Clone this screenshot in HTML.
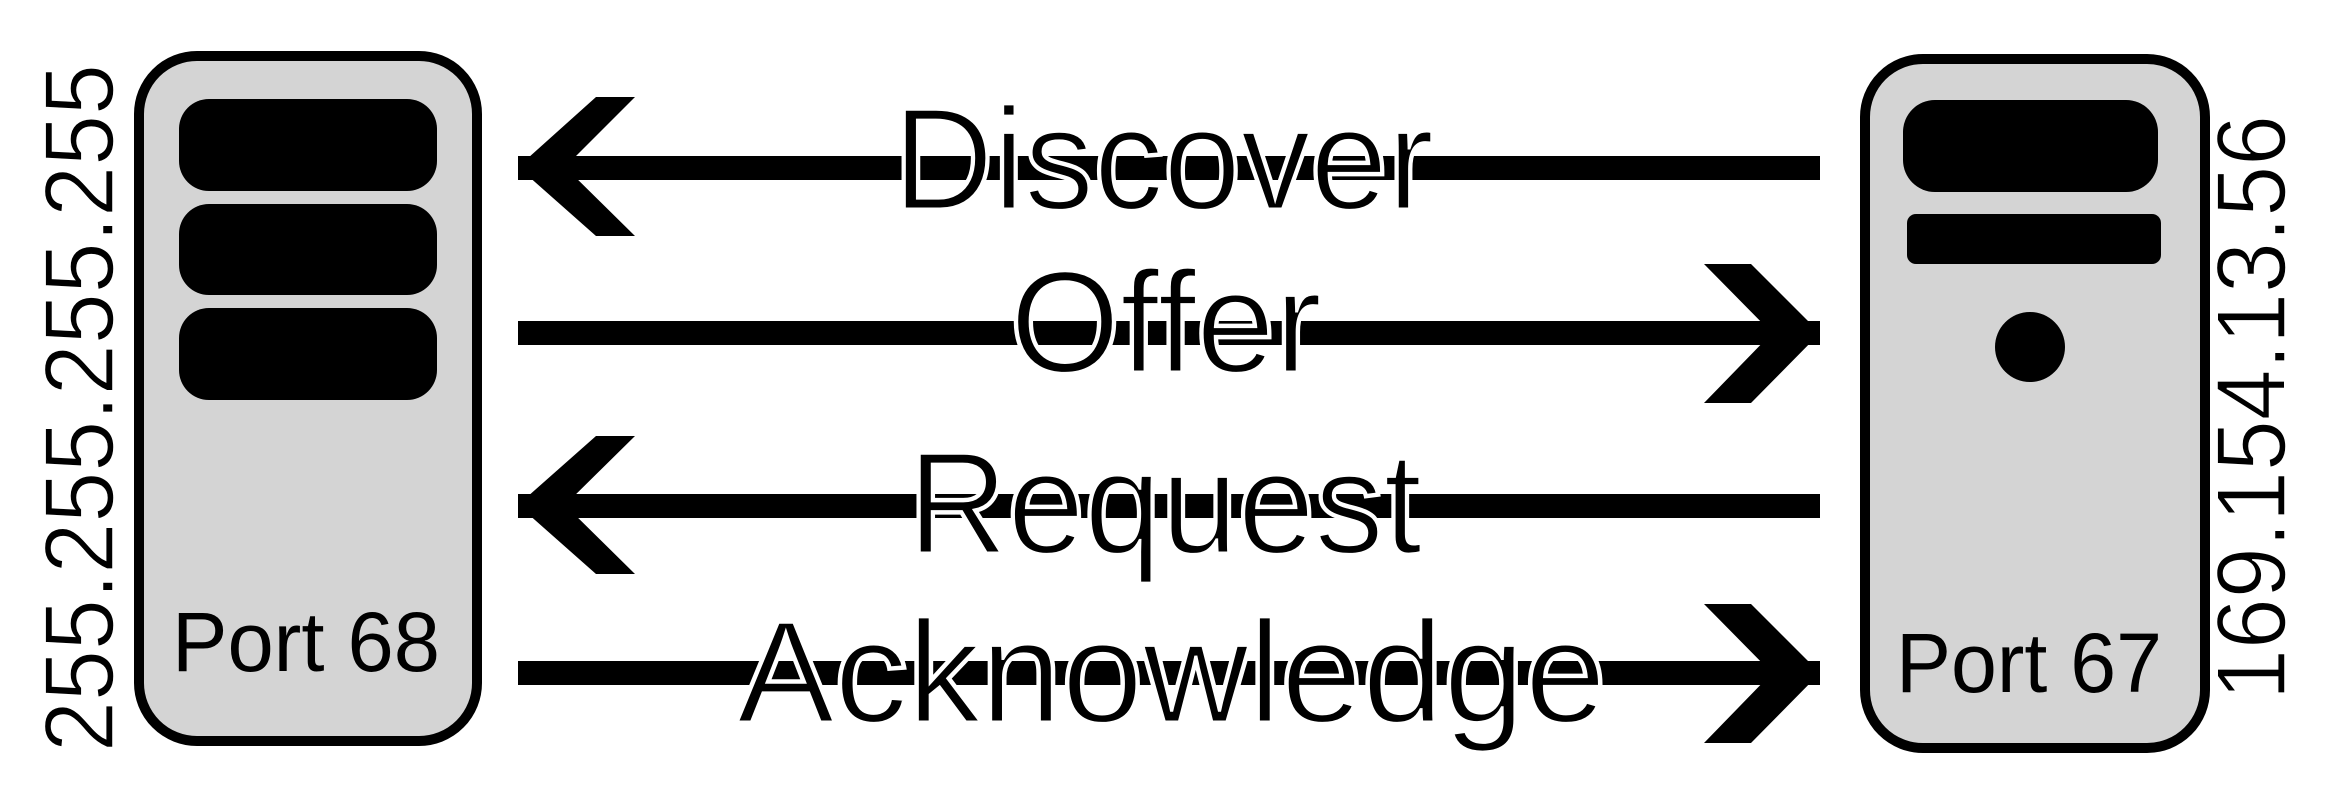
<!DOCTYPE html>
<html><head><meta charset="utf-8"><style>html,body{margin:0;padding:0;background:#fff}svg{display:block}</style></head>
<body>
<svg width="2343" height="811" viewBox="0 0 2343 811" xmlns="http://www.w3.org/2000/svg">
<rect width="2343" height="811" fill="#fff"/>
<!-- left server -->
<rect x="139" y="56" width="338" height="685" rx="58" fill="#d4d4d4" stroke="#000" stroke-width="10"/>
<rect x="179" y="99" width="258" height="92" rx="30" fill="#000"/>
<rect x="179" y="204" width="258" height="91" rx="30" fill="#000"/>
<rect x="179" y="308" width="258" height="92" rx="30" fill="#000"/>
<g font-family="Liberation Sans, sans-serif" fill="#000">
<text x="172" y="671" font-size="84" textLength="268" lengthAdjust="spacingAndGlyphs">Port 68</text>
<text transform="translate(113,752) rotate(-90)" font-size="98" textLength="688" lengthAdjust="spacingAndGlyphs" stroke="#fff" stroke-width="1.5">255.255.255.255</text>
</g>
<!-- right server -->
<rect x="1865" y="59" width="340" height="689" rx="58" fill="#d4d4d4" stroke="#000" stroke-width="10"/>
<rect x="1903" y="100" width="255" height="92" rx="32" fill="#000"/>
<rect x="1907" y="214" width="254" height="50" rx="9" fill="#000"/>
<ellipse cx="2030" cy="347" rx="35" ry="35" fill="#000"/>
<g font-family="Liberation Sans, sans-serif" fill="#000">
<text x="1896" y="692" font-size="84" textLength="266" lengthAdjust="spacingAndGlyphs">Port 67</text>
<text transform="translate(2285,700) rotate(-90)" font-size="98" textLength="585" lengthAdjust="spacingAndGlyphs" stroke="#fff" stroke-width="1.5">169.154.13.56</text>
</g>
<!-- arrows -->
<rect x="518" y="156" width="1302" height="24" fill="#000"/>
<polygon points="518,167 596,97 635,97 565,167 635,236 596,236" fill="#000"/>
<rect x="518" y="321" width="1302" height="24" fill="#000"/>
<polygon points="1820,333 1751,264 1704,264 1772,333 1704,403 1751,403" fill="#000"/>
<rect x="518" y="494" width="1302" height="24" fill="#000"/>
<polygon points="518,505 596,436 635,436 565,505 635,574 596,574" fill="#000"/>
<rect x="518" y="661" width="1302" height="24" fill="#000"/>
<polygon points="1820,673 1751,604 1704,604 1772,673 1704,743 1751,743" fill="#000"/>
<!-- labels: halo layer -->
<g font-family="Liberation Sans, sans-serif" font-size="145" fill="#fff" stroke="#fff" stroke-width="6">
<text x="893" y="209" textLength="541" lengthAdjust="spacingAndGlyphs">Discover</text>
<text x="1010" y="372" textLength="312" lengthAdjust="spacingAndGlyphs">Offer</text>
<text x="908" y="553" textLength="514" lengthAdjust="spacingAndGlyphs">Request</text>
<text x="737" y="722" textLength="869" lengthAdjust="spacingAndGlyphs">Acknowledge</text>
</g>
<!-- labels: thin black -->
<g font-family="Liberation Sans, sans-serif" font-size="145" fill="#000" stroke="#fff" stroke-width="3">
<text x="893" y="209" textLength="541" lengthAdjust="spacingAndGlyphs">Discover</text>
<text x="1010" y="372" textLength="312" lengthAdjust="spacingAndGlyphs">Offer</text>
<text x="908" y="553" textLength="514" lengthAdjust="spacingAndGlyphs">Request</text>
<text x="737" y="722" textLength="869" lengthAdjust="spacingAndGlyphs">Acknowledge</text>
</g>
</svg>
</body></html>
